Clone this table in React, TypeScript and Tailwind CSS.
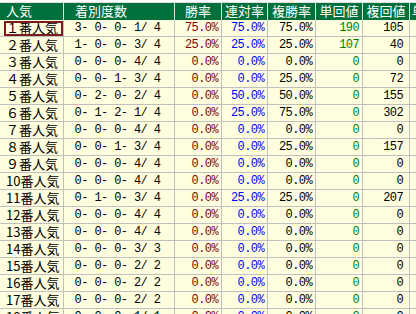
import React from "react";

interface Row {
  label: string;
  record: string;
  win: string;
  ren: string;
  fuku: string;
  tan: string;
  fukuVal: string;
}

const rows: Row[] = [
  { label: "１番人気", record: " 3- 0- 0- 1/ 4", win: "75.0%", ren: "75.0%", fuku: "75.0%", tan: "190", fukuVal: "105" },
  { label: "２番人気", record: " 1- 0- 0- 3/ 4", win: "25.0%", ren: "25.0%", fuku: "25.0%", tan: "107", fukuVal: "40" },
  { label: "３番人気", record: " 0- 0- 0- 4/ 4", win: "0.0%", ren: "0.0%", fuku: "0.0%", tan: "0", fukuVal: "0" },
  { label: "４番人気", record: " 0- 0- 1- 3/ 4", win: "0.0%", ren: "0.0%", fuku: "25.0%", tan: "0", fukuVal: "72" },
  { label: "５番人気", record: " 0- 2- 0- 2/ 4", win: "0.0%", ren: "50.0%", fuku: "50.0%", tan: "0", fukuVal: "155" },
  { label: "６番人気", record: " 0- 1- 2- 1/ 4", win: "0.0%", ren: "25.0%", fuku: "75.0%", tan: "0", fukuVal: "302" },
  { label: "７番人気", record: " 0- 0- 0- 4/ 4", win: "0.0%", ren: "0.0%", fuku: "0.0%", tan: "0", fukuVal: "0" },
  { label: "８番人気", record: " 0- 0- 1- 3/ 4", win: "0.0%", ren: "0.0%", fuku: "25.0%", tan: "0", fukuVal: "157" },
  { label: "９番人気", record: " 0- 0- 0- 4/ 4", win: "0.0%", ren: "0.0%", fuku: "0.0%", tan: "0", fukuVal: "0" },
  { label: "10番人気", record: " 0- 0- 0- 4/ 4", win: "0.0%", ren: "0.0%", fuku: "0.0%", tan: "0", fukuVal: "0" },
  { label: "11番人気", record: " 0- 1- 0- 3/ 4", win: "0.0%", ren: "25.0%", fuku: "25.0%", tan: "0", fukuVal: "207" },
  { label: "12番人気", record: " 0- 0- 0- 4/ 4", win: "0.0%", ren: "0.0%", fuku: "0.0%", tan: "0", fukuVal: "0" },
  { label: "13番人気", record: " 0- 0- 0- 4/ 4", win: "0.0%", ren: "0.0%", fuku: "0.0%", tan: "0", fukuVal: "0" },
  { label: "14番人気", record: " 0- 0- 0- 3/ 3", win: "0.0%", ren: "0.0%", fuku: "0.0%", tan: "0", fukuVal: "0" },
  { label: "15番人気", record: " 0- 0- 0- 2/ 2", win: "0.0%", ren: "0.0%", fuku: "0.0%", tan: "0", fukuVal: "0" },
  { label: "16番人気", record: " 0- 0- 0- 2/ 2", win: "0.0%", ren: "0.0%", fuku: "0.0%", tan: "0", fukuVal: "0" },
  { label: "17番人気", record: " 0- 0- 0- 2/ 2", win: "0.0%", ren: "0.0%", fuku: "0.0%", tan: "0", fukuVal: "0" },
  { label: "18番人気", record: " 0- 0- 0- 1/ 1", win: "0.0%", ren: "0.0%", fuku: "0.0%", tan: "0", fukuVal: "0" },
];

const cols = "grid grid-cols-[64px_111px_47px_46px_48px_47px_47px_1fr]";
const jp = "font-['Noto_Sans_CJK_JP',sans-serif] text-[13px] leading-[16px]";
const num = "font-['Liberation_Mono','Noto_Sans_CJK_JP',monospace] text-[12px] tracking-[-0.6px] leading-[16px] whitespace-pre";
const cell = "border-r border-b border-[#c0c0c0]";

export default function App() {
  return (
    <div className="w-[416px] h-[314px] overflow-hidden bg-[#f0f0f0]">
      <div className="h-[3px] border-b border-[#e0e0e0] bg-white" />
      {/* header */}
      <div className={`${cols} h-[17px] bg-[#00703c] text-white ${jp}`}>
        <div className="border-r border-[#d8e8d8] pl-[6px]">人気</div>
        <div className="border-r border-[#d8e8d8] pl-[11px]">着別度数</div>
        <div className="border-r border-[#d8e8d8] text-center">勝率</div>
        <div className="border-r border-[#d8e8d8] text-center">連対率</div>
        <div className="border-r border-[#d8e8d8] text-center">複勝率</div>
        <div className="border-r border-[#d8e8d8] text-center">単回値</div>
        <div className="border-r border-[#d8e8d8] text-center">複回値</div>
        <div className="pl-[2px]">単</div>
      </div>
      {rows.map((r, i) => (
        <div key={i} className={`${cols} h-[17px] bg-[#ffffe0] text-black`}>
          <div className={`relative ${cell} pl-[6px] ${jp}`}>
            {r.label}
            {i === 0 && (
              <div className="absolute left-[4px] top-[1px] right-0 bottom-0 border-2 border-[#7a1c1c]" />
            )}
          </div>
          <div className={`${cell} pl-[4px] ${num}`}>{r.record}</div>
          <div className={`${cell} text-right pr-[3px] text-[#800000] ${num}`}>{r.win}</div>
          <div className={`${cell} text-right pr-[3px] text-[#0000ff] ${num}`}>{r.ren}</div>
          <div className={`${cell} text-right pr-[3px] ${num}`}>{r.fuku}</div>
          <div className={`${cell} text-right pr-[3px] text-[#008000] ${num}`}>{r.tan}</div>
          <div className={`${cell} text-right pr-[6px] ${num}`}>{r.fukuVal}</div>
          <div className="border-b border-[#c0c0c0]" />
        </div>
      ))}
    </div>
  );
}
